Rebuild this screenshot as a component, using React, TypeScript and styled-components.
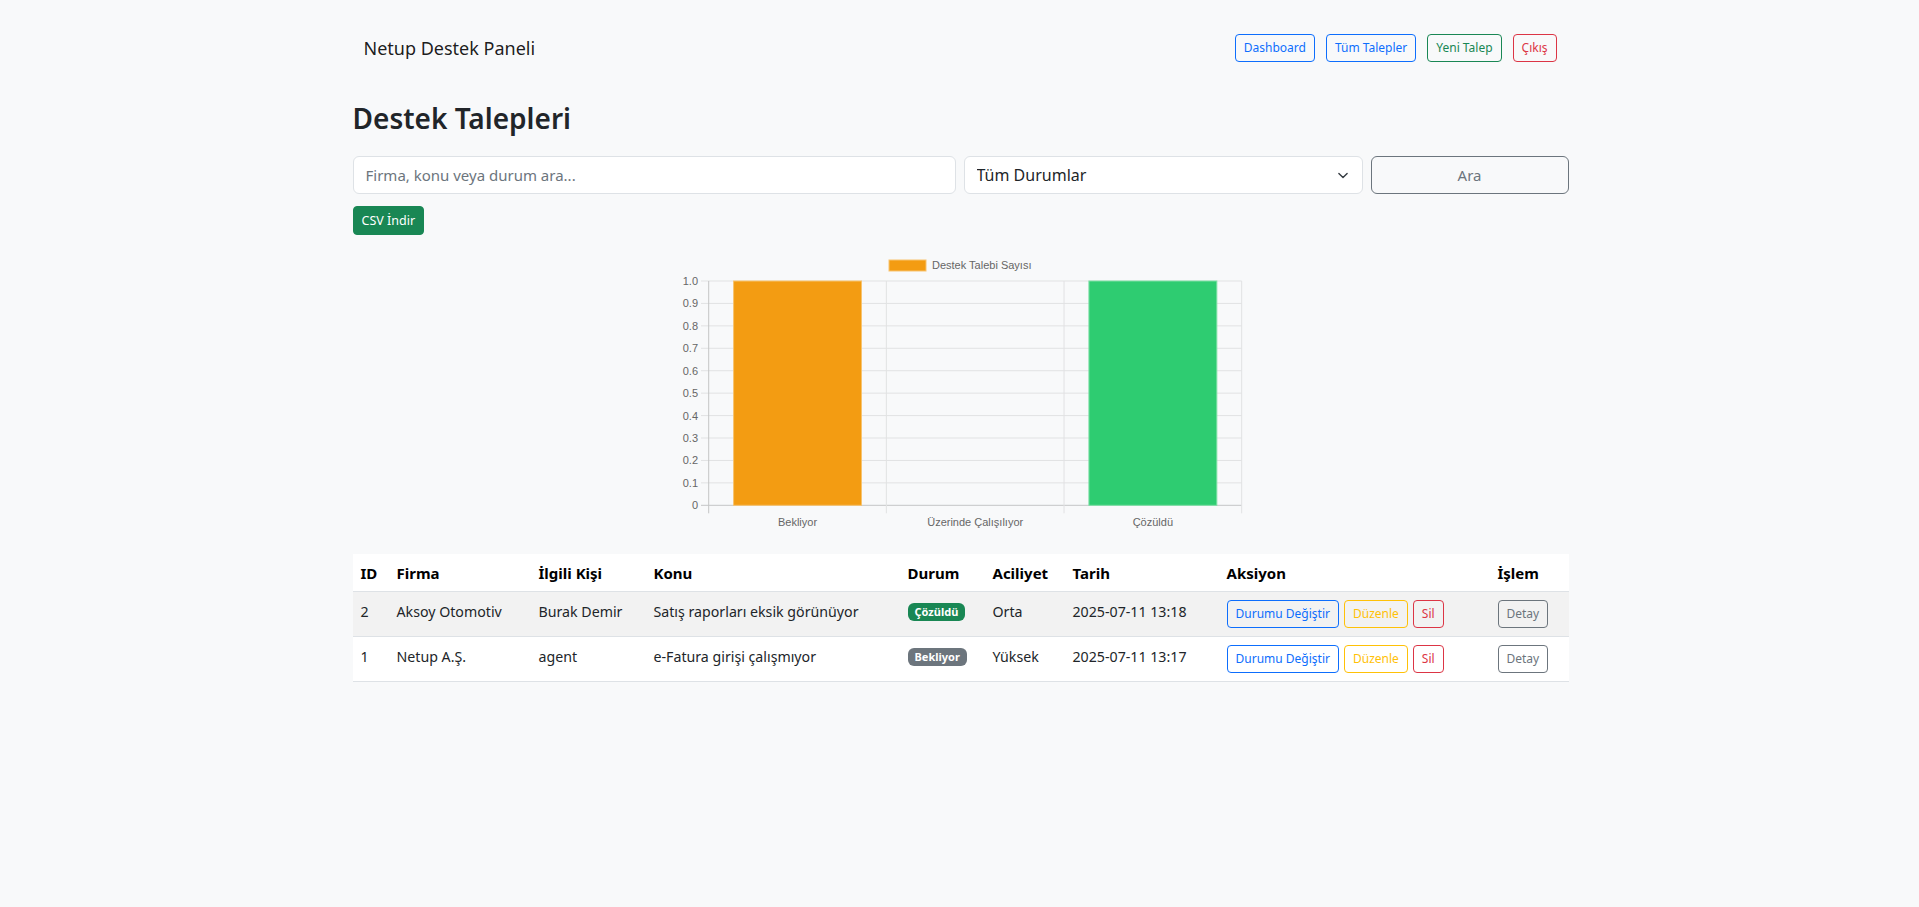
import React from 'react';
import styled, { createGlobalStyle, css } from 'styled-components';

const GlobalStyle = createGlobalStyle`
  body {
    margin: 0;
    background: #f8f9fa;
    color: #212529;
    font-family: "Noto Sans", "Open Sans", sans-serif;
    font-size: 15px;
    line-height: 24px;
  }
  * {
    box-sizing: border-box;
  }
`;

type Tone = 'primary' | 'success' | 'danger' | 'warning' | 'secondary';

const tones: Record<Tone, string> = {
  primary: '#0d6efd',
  success: '#198754',
  danger: '#dc3545',
  warning: '#ffc107',
  secondary: '#6c757d',
};

const chartData = [
  { label: 'Bekliyor', value: 1, color: '#f39c12', border: '#f7c36f' },
  { label: 'Üzerinde Çalışılıyor', value: 0, color: '#3498db', border: '#3498db' },
  { label: 'Çözüldü', value: 1, color: '#2ecc71', border: '#7ee0a6' },
];

const tickets = [
  {
    id: 2,
    company: 'Aksoy Otomotiv',
    contact: 'Burak Demir',
    subject: 'Satış raporları eksik görünüyor',
    status: 'Çözüldü',
    statusTone: 'success' as Tone,
    urgency: 'Orta',
    date: '2025-07-11 13:18',
  },
  {
    id: 1,
    company: 'Netup A.Ş.',
    contact: 'agent',
    subject: 'e-Fatura girişi çalışmıyor',
    status: 'Bekliyor',
    statusTone: 'secondary' as Tone,
    urgency: 'Yüksek',
    date: '2025-07-11 13:17',
  },
];

const columns = [
  { title: 'ID', width: 36 },
  { title: 'Firma', width: 142 },
  { title: 'İlgili Kişi', width: 115 },
  { title: 'Konu', width: 254 },
  { title: 'Durum', width: 85 },
  { title: 'Aciliyet', width: 80 },
  { title: 'Tarih', width: 154 },
  { title: 'Aksiyon', width: 271 },
  { title: 'İşlem', width: 79 },
];

const StatusChart = () => {
  const left = 47.7;
  const right = 580.7;
  const top = 31;
  const zero = 255.3;
  const step = (zero - top) / 10;
  const catWidth = (right - left) / chartData.length;
  const barWidth = catWidth * 0.72;
  const ticks = Array.from({ length: 11 }, (_, i) => i);

  return (
    <ChartSvg width={600} height={290} viewBox="0 0 600 290">
      <rect x={228} y={10} width={37} height={11} fill="#f39c12" stroke="#f7c36f" strokeWidth={1} />
      <text x={271} y={19} fontSize={11} fill="#666" fontFamily="Liberation Sans, Arial, sans-serif">
        Destek Talebi Sayısı
      </text>
      {ticks.map((i) => {
        const y = zero - i * step;
        return (
          <g key={i}>
            <line
              x1={40}
              x2={right}
              y1={y}
              y2={y}
              stroke={i === 0 ? '#c4c5c6' : '#e1e2e3'}
              strokeWidth={1}
            />
            <text
              x={37}
              y={y + 4}
              fontSize={11}
              textAnchor="end"
              fill="#666"
              fontFamily="Liberation Sans, Arial, sans-serif"
            >
              {i === 0 ? '0' : i === 10 ? '1.0' : (i / 10).toFixed(1)}
            </text>
          </g>
        );
      })}
      {[0, 1, 2, 3].map((i) => {
        const x = left + i * catWidth;
        return (
          <line
            key={i}
            x1={x}
            x2={x}
            y1={top}
            y2={zero + 8}
            stroke={i === 0 ? '#c4c5c6' : '#e1e2e3'}
            strokeWidth={1}
          />
        );
      })}
      {chartData.map((d, i) => {
        const cx = left + catWidth * i + catWidth / 2;
        const h = d.value * (zero - top);
        return (
          <g key={d.label}>
            {d.value > 0 && (
              <rect
                x={cx - barWidth / 2}
                y={zero - h}
                width={barWidth}
                height={h}
                fill={d.color}
                stroke={d.border}
                strokeWidth={1}
              />
            )}
            <text
              x={cx}
              y={276}
              fontSize={11}
              textAnchor="middle"
              fill="#666"
              fontFamily="Liberation Sans, Arial, sans-serif"
            >
              {d.label}
            </text>
          </g>
        );
      })}
    </ChartSvg>
  );
};

export default function App() {
  return (
    <>
      <GlobalStyle />
      <Page>
        <NavBar>
          <Brand>Netup Destek Paneli</Brand>
          <NavActions>
            <SmallButton tone="primary">Dashboard</SmallButton>
            <SmallButton tone="primary">Tüm Talepler</SmallButton>
            <SmallButton tone="success">Yeni Talep</SmallButton>
            <SmallButton tone="danger">Çıkış</SmallButton>
          </NavActions>
        </NavBar>

        <Title>Destek Talepleri</Title>

        <SearchRow>
          <SearchInput placeholder="Firma, konu veya durum ara..." />
          <SelectWrap>
            <StatusSelect defaultValue="">
              <option value="">Tüm Durumlar</option>
              <option value="Bekliyor">Bekliyor</option>
              <option value="Üzerinde Çalışılıyor">Üzerinde Çalışılıyor</option>
              <option value="Çözüldü">Çözüldü</option>
            </StatusSelect>
            <Chevron width="14" height="11" viewBox="0 0 16 16">
              <path d="m2 5 6 6 6-6" fill="none" stroke="#343a40" strokeWidth="2" strokeLinecap="round" strokeLinejoin="round" />
            </Chevron>
          </SelectWrap>
          <SearchButton>Ara</SearchButton>
        </SearchRow>

        <CsvButton>CSV İndir</CsvButton>

        <StatusChart />

        <TicketTable>
          <colgroup>
            {columns.map((c) => (
              <col key={c.title} style={{ width: c.width }} />
            ))}
          </colgroup>
          <thead>
            <tr>
              {columns.map((c) => (
                <HeadCell key={c.title}>{c.title}</HeadCell>
              ))}
            </tr>
          </thead>
          <tbody>
            {tickets.map((t, i) => (
              <Row key={t.id} striped={i % 2 === 0}>
                <Cell>{t.id}</Cell>
                <Cell>{t.company}</Cell>
                <Cell>{t.contact}</Cell>
                <Cell>{t.subject}</Cell>
                <Cell>
                  <Badge tone={t.statusTone}>{t.status}</Badge>
                </Cell>
                <Cell>{t.urgency}</Cell>
                <Cell>{t.date}</Cell>
                <Cell>
                  <ActionGroup>
                    <SmallButton tone="primary">Durumu Değiştir</SmallButton>
                    <SmallButton tone="warning">Düzenle</SmallButton>
                    <SmallButton tone="danger">Sil</SmallButton>
                  </ActionGroup>
                </Cell>
                <Cell>
                  <SmallButton tone="secondary">Detay</SmallButton>
                </Cell>
              </Row>
            ))}
          </tbody>
        </TicketTable>
      </Page>
    </>
  );
}

const Page = styled.div`
  width: 1216px;
  margin-left: calc((100% - 1216px) / 2 + 1px);
  padding-bottom: 40px;
`;

const NavBar = styled.nav`
  display: flex;
  justify-content: space-between;
  align-items: center;
  padding: 34px 12px 0 11px;
`;

const Brand = styled.div`
  font-size: 18px;
  line-height: 28px;
  color: rgba(0, 0, 0, 0.9);
`;

const NavActions = styled.div`
  display: flex;
  gap: 11px;
`;

const outline = (tone: Tone) => css`
  color: ${tones[tone]};
  border: 1px solid ${tones[tone]};
  background: transparent;
`;

const SmallButton = styled.button<{ tone: Tone }>`
  ${({ tone }) => outline(tone)};
  font-family: "Noto Sans", "Open Sans", sans-serif;
  font-size: 12px;
  line-height: 18px;
  padding: 4px 8px;
  border-radius: 4px;
  cursor: pointer;
  white-space: nowrap;
`;

const Title = styled.h2`
  margin: 39px 0 0;
  font-size: 28px;
  line-height: 34px;
  font-weight: 600;
`;

const SearchRow = styled.div`
  display: grid;
  grid-template-columns: 603px 399px 1fr;
  gap: 8px;
  margin-top: 21px;
`;

const field = css`
  height: 38px;
  border: 1px solid #dee2e6;
  border-radius: 6px;
  background: #fff;
  font-family: "Noto Sans", "Open Sans", sans-serif;
  font-size: 15px;
  color: #212529;
  padding: 0 12px;
  width: 100%;
  outline: none;
`;

const SearchInput = styled.input`
  ${field};

  &::placeholder {
    color: #6c757d;
  }
`;

const SelectWrap = styled.div`
  position: relative;
`;

const StatusSelect = styled.select`
  ${field};
  font-size: 16px;
  appearance: none;
  padding-right: 36px;
`;

const Chevron = styled.svg`
  position: absolute;
  right: 13px;
  top: 14px;
  pointer-events: none;
`;

const SearchButton = styled.button`
  height: 38px;
  border: 1px solid #6c757d;
  border-radius: 6px;
  background: transparent;
  color: #6c757d;
  font-family: "Noto Sans", "Open Sans", sans-serif;
  font-size: 15px;
`;

const CsvButton = styled.button`
  display: block;
  margin-top: 12px;
  background: #198754;
  border: 1px solid #198754;
  color: #fff;
  border-radius: 4px;
  font-family: "Noto Sans", "Open Sans", sans-serif;
  font-size: 12.5px;
  line-height: 19px;
  padding: 4px 8px;
`;

const ChartSvg = styled.svg`
  display: block;
  margin: 15px auto 0;
`;

const TicketTable = styled.table`
  width: 100%;
  margin-top: 14px;
  border-collapse: collapse;
  table-layout: fixed;
  background: #fff;
`;

const HeadCell = styled.th`
  text-align: left;
  font-weight: 700;
  color: #000;
  padding: 7px 8px 6px;
  border-bottom: 1px solid #dee2e6;
  white-space: nowrap;
`;

const Row = styled.tr<{ striped?: boolean }>`
  background: ${({ striped }) => (striped ? '#f2f2f2' : '#fff')};
`;

const Cell = styled.td`
  padding: 8px;
  vertical-align: top;
  border-bottom: 1px solid #dee2e6;
  white-space: nowrap;
  font-size: 14.2px;
`;

const Badge = styled.span<{ tone: Tone }>`
  display: inline-block;
  background: ${({ tone }) => tones[tone]};
  color: #fff;
  font-size: 11px;
  font-weight: 700;
  line-height: 12px;
  padding: 3px 7px;
  border-radius: 6px;
  vertical-align: 1px;
`;

const ActionGroup = styled.div`
  display: flex;
  gap: 5px;
`;
